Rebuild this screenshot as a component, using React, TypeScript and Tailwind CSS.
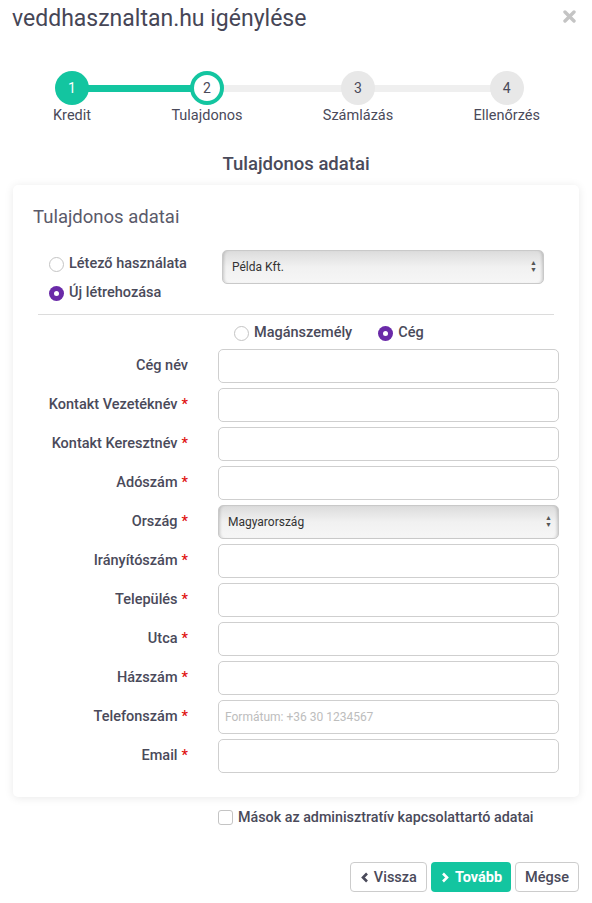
import React, { useState } from "react";

const ink = "text-[#4a4a5a]";

// Steps of the wizard
const steps = [
  { n: 1, label: "Kredit", state: "done" },
  { n: 2, label: "Tulajdonos", state: "active" },
  { n: 3, label: "Számlázás", state: "todo" },
  { n: 4, label: "Ellenőrzés", state: "todo" },
];

interface Field {
  label: string;
  required?: boolean;
  kind?: "select";
  value?: string;
  placeholder?: string;
}

const fields: Field[] = [
  { label: "Cég név" },
  { label: "Kontakt Vezetéknév", required: true },
  { label: "Kontakt Keresztnév", required: true },
  { label: "Adószám", required: true },
  { label: "Ország", required: true, kind: "select", value: "Magyarország" },
  { label: "Irányítószám", required: true },
  { label: "Település", required: true },
  { label: "Utca", required: true },
  { label: "Házszám", required: true },
  { label: "Telefonszám", required: true, placeholder: "Formátum: +36 30 1234567" },
  { label: "Email", required: true },
];

const Radio = ({ checked }: { checked: boolean }) =>
  checked ? (
    <span className="w-[15px] h-[15px] rounded-full bg-[#6a2aa8] flex items-center justify-center shrink-0">
      <span className="w-[5px] h-[5px] rounded-full bg-white" />
    </span>
  ) : (
    <span className="w-[15px] h-[15px] rounded-full border border-[#c4c4c4] bg-white shrink-0" />
  );

const SelectBox = ({ value, className }: { value: string; className: string }) => (
  <div
    className={`${className} h-[34px] rounded-[5px] border border-[#c9c9c9] bg-gradient-to-b from-[#dcdcdc] via-[#f1f1f1] to-[#f6f6f6] shadow-[inset_3px_0_3px_-2px_rgba(0,0,0,0.18),inset_-3px_0_3px_-2px_rgba(0,0,0,0.18)] flex items-center justify-between pl-[9px] pr-[6px] text-[12px] text-[#333]`}
  >
    <span>{value}</span>
    <span className="flex flex-col leading-none text-[7px] text-[#555]">
      <span>▲</span>
      <span>▼</span>
    </span>
  </div>
);

const App: React.FC = () => {
  const [other, setOther] = useState(false);

  return (
    <div
      className={`w-[592px] h-[903px] bg-white ${ink} relative`}
      style={{ fontFamily: "Roboto, 'Noto Sans', sans-serif" }}
    >
      {/* Header */}
      <div className="flex items-start justify-between pl-3 pr-4 pt-[5px]">
        <h1 className="text-[23px] leading-[28px] text-[#464656]">veddhasznaltan.hu igénylése</h1>
        <button className="mt-[5px]">
          <svg width="13" height="13" viewBox="0 0 13 13">
            <path d="M2 2L11 11M11 2L2 11" stroke="#c4c4c4" strokeWidth="3.4" strokeLinecap="round" />
          </svg>
        </button>
      </div>

      {/* Stepper */}
      <div className="relative ml-[53px] w-[487px] mt-[38px] flex justify-between">
        <div className="absolute left-[18px] right-[34px] top-[14px] h-[7px] bg-[#efefef]" />
        <div className="absolute left-[18px] w-[136px] top-[14px] h-[7px] bg-[#13c5a0]" />
        {steps.map((s) => (
          <div key={s.n} className="relative flex flex-col items-center">
            <div
              className={`w-[34px] h-[34px] rounded-full flex items-center justify-center text-[14px] ${
                s.state === "done"
                  ? "bg-[#13c5a0] text-white"
                  : s.state === "active"
                  ? "bg-white border-[4px] border-[#13c5a0] text-[#4a4a5a]"
                  : "bg-[#e8e8e8] text-[#4a4a5a]"
              }`}
            >
              {s.n}
            </div>
            <span className="text-[14.5px] leading-[20px] mt-[1px] whitespace-nowrap">{s.label}</span>
          </div>
        ))}
      </div>

      <h2 className="text-center text-[18.5px] leading-[24px] font-medium mt-[26px]">Tulajdonos adatai</h2>

      {/* Card */}
      <div className="mx-[13px] mt-[9px] w-[566px] rounded-[5px] bg-white shadow-[0_1px_10px_rgba(0,0,0,0.09)] px-5 pt-[20px] pb-[24px]">
        <h3 className="text-[18.5px] leading-[24px] text-[#5a5a6a]">Tulajdonos adatai</h3>

        <div className="flex mt-[21px]">
          <div className="pl-4 w-[189px] flex flex-col gap-[9px] text-[14.5px] font-medium pt-[4px]">
            <label className="flex items-center gap-[5px] h-[20px]">
              <Radio checked={false} />
              Létező használata
            </label>
            <label className="flex items-center gap-[5px] h-[20px]">
              <Radio checked />
              Új létrehozása
            </label>
          </div>
          <SelectBox value="Példa Kft." className="w-[322px] h-[33px]" />
        </div>

        <div className="mx-[5px] mt-[11px] border-t border-[#dcdcdc]" />

        <div className="flex items-center gap-[26px] ml-[201px] mt-[8px] h-[20px] text-[14.5px] font-medium">
          <label className="flex items-center gap-[5px]">
            <Radio checked={false} />
            Magánszemély
          </label>
          <label className="flex items-center gap-[5px]">
            <Radio checked />
            Cég
          </label>
        </div>

        <div className="mt-[6px] flex flex-col gap-[5px]">
          {fields.map((f) => (
            <div key={f.label} className="flex items-center gap-[30px]">
              <label className="w-[155px] text-right text-[14.5px] font-medium whitespace-nowrap">
                {f.label}
                {f.required && <span className="text-[#e01010] ml-[4px]">*</span>}
              </label>
              {f.kind === "select" ? (
                <SelectBox value={f.value!} className="flex-1" />
              ) : (
                <input
                  className="flex-1 h-[34px] rounded-[5px] border border-[#cfcfcf] px-[6px] text-[12px] outline-none placeholder:text-[#bdbdbd]"
                  placeholder={f.placeholder}
                />
              )}
            </div>
          ))}
        </div>
      </div>

      {/* Extra contact checkbox */}
      <label className="flex items-center gap-[5px] ml-[218px] mt-[10px] text-[14.3px] font-medium text-[#4a4a5a]">
        <span
          onClick={() => setOther(!other)}
          className="w-[15px] h-[15px] rounded-[3px] border border-[#c4c4c4] bg-white shrink-0"
        />
        Mások az adminisztratív kapcsolattartó adatai
      </label>

      {/* Footer buttons */}
      <div className="flex justify-end gap-[4px] pr-[13px] mt-[34px]">
        <button className="h-[30px] pl-[10px] pr-[9px] flex items-center gap-[5px] rounded-[4px] border border-[#cccccc] bg-white text-[14.5px] font-medium">
          <svg width="8" height="11" viewBox="0 0 8 11">
            <path d="M6 1.5L2 5.5L6 9.5" stroke="#4a4a5a" strokeWidth="2.6" fill="none" />
          </svg>
          Vissza
        </button>
        <button className="h-[30px] pl-[10px] pr-[9px] flex items-center gap-[6px] rounded-[4px] bg-[#13c5a0] text-white text-[14.5px] font-bold">
          <svg width="8" height="11" viewBox="0 0 8 11">
            <path d="M2 1.5L6 5.5L2 9.5" stroke="#fff" strokeWidth="2.6" fill="none" />
          </svg>
          Tovább
        </button>
        <button className="h-[30px] px-[9px] rounded-[4px] border border-[#cccccc] bg-white text-[14.5px] font-medium">
          Mégse
        </button>
      </div>
    </div>
  );
};

export default App;
